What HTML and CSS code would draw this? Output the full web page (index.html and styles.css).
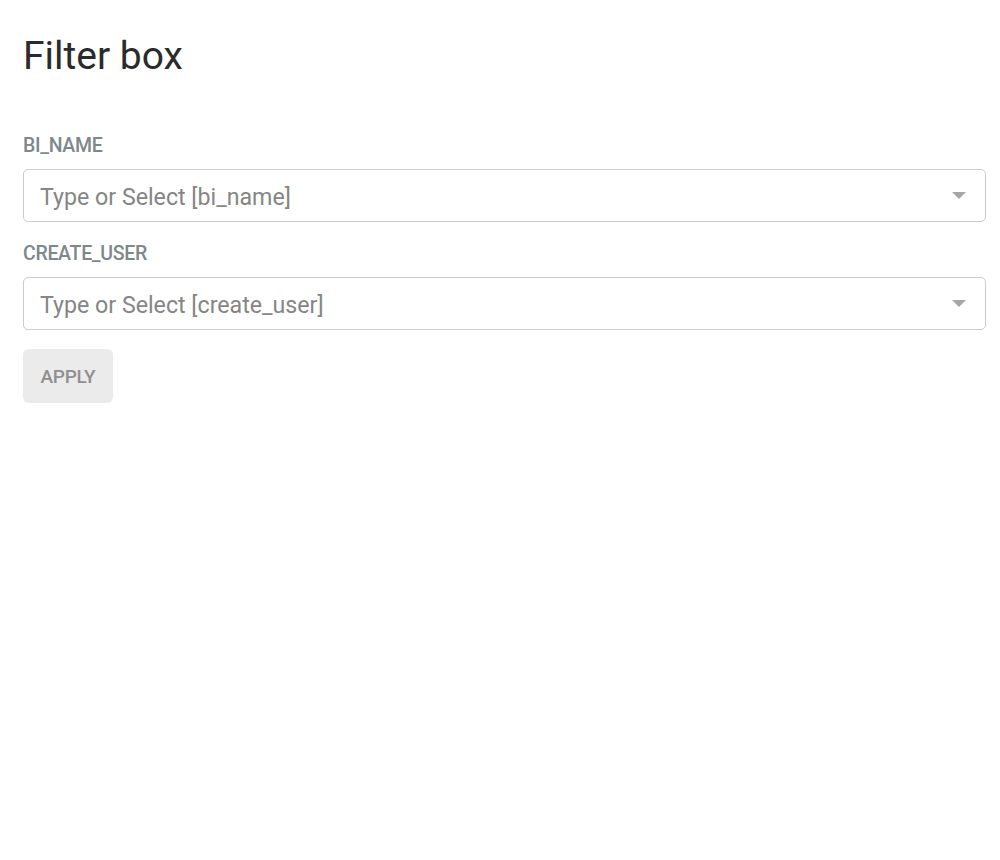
FILE: index.html
```html
<!DOCTYPE html>
<html>
<head>
<meta charset="utf-8">
<link rel="stylesheet" href="styles.css">
</head>
<body>
<div class="page">
  <h1 class="title">Filter box</h1>
  <div class="filters">
    <div class="field">
      <div class="label">BI_NAME</div>
      <div class="select">
        <span class="placeholder">Type or Select [bi_name]</span>
        <span class="arrow"></span>
      </div>
    </div>
    <div class="field">
      <div class="label">CREATE_USER</div>
      <div class="select">
        <span class="placeholder">Type or Select [create_user]</span>
        <span class="arrow"></span>
      </div>
    </div>
    <button class="apply">APPLY</button>
  </div>
</div>
</body>
</html>
```
FILE: styles.css
```css
html, body {
  margin: 0;
  padding: 0;
  background: #ffffff;
}
.page {
  padding: 28px 14px 0 23px;
  font-family: Roboto, "Liberation Sans", sans-serif;
}
.title {
  margin: 0;
  font-weight: 400;
  font-size: 39px;
  line-height: 56px;
  color: #2b2b2b;
}
.filters {
  margin-top: 50px;
  display: flex;
  flex-direction: column;
}
.field {
  display: flex;
  flex-direction: column;
  margin-bottom: 20px;
}
.field:last-of-type {
  margin-bottom: 19px;
}
.label {
  font-size: 19.5px;
  font-weight: 500;
  color: #7d878c;
  letter-spacing: -0.3px;
  line-height: 24px;
  margin-bottom: 11px;
}
.select {
  height: 51px;
  border: 1px solid #cccccc;
  border-radius: 5px;
  display: flex;
  align-items: center;
  justify-content: space-between;
  padding: 0 19px 0 16px;
}
.placeholder {
  font-size: 23.2px;
  line-height: 28px;
  padding-top: 2px;
  color: #858585;
}
.arrow {
  width: 0;
  height: 0;
  border-left: 7px solid transparent;
  border-right: 7px solid transparent;
  border-top: 7px solid #a6a6a6;
}
.apply {
  align-self: flex-start;
  width: 90px;
  height: 54px;
  border: none;
  border-radius: 6px;
  background: #ebebeb;
  color: #8f8f8f;
  font-family: Roboto, "Liberation Sans", sans-serif;
  font-size: 19px;
  font-weight: 500;
  letter-spacing: -0.3px;
  padding: 0;
}
```
